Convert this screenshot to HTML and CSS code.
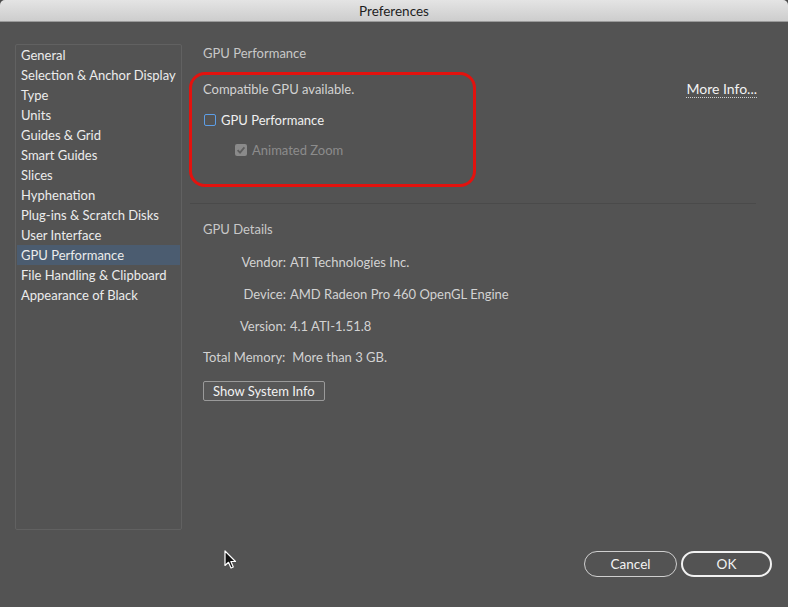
FILE: index.html
```html
<!DOCTYPE html>
<html lang="en">
<head>
    <meta charset="UTF-8">
    <title>Preferences</title>
    <link rel="stylesheet" href="styles.css">
</head>
<body>
    <div class="window">
        <div class="titlebar">Preferences</div>

        <div class="content">
            <ul class="sidebar">
                <li>General</li>
                <li>Selection &amp; Anchor Display</li>
                <li>Type</li>
                <li>Units</li>
                <li>Guides &amp; Grid</li>
                <li>Smart Guides</li>
                <li>Slices</li>
                <li>Hyphenation</li>
                <li>Plug-ins &amp; Scratch Disks</li>
                <li>User Interface</li>
                <li class="selected">GPU Performance</li>
                <li>File Handling &amp; Clipboard</li>
                <li>Appearance of Black</li>
            </ul>

            <div class="panel">
                <div class="section-title">GPU Performance</div>

                <div class="row first">
                    <span>Compatible GPU available.</span>
                    <a class="more-info">More Info...</a>
                </div>
                <label class="check-row">
                    <span class="checkbox"></span>
                    <span class="check-label">GPU Performance</span>
                </label>
                <label class="check-row sub disabled">
                    <span class="checkbox checked">
                        <svg width="12" height="12" viewBox="0 0 12 12"><path d="M2.6 6.2 L5 8.6 L9.4 3.4" fill="none" stroke="#5d5d5d" stroke-width="1.8"/></svg>
                    </span>
                    <span class="check-label">Animated Zoom</span>
                </label>

                <div class="highlight"></div>

                <hr class="separator">

                <div class="section-title details-title">GPU Details</div>
                <div class="details">
                    <span class="label">Vendor:</span><span>ATI Technologies Inc.</span>
                    <span class="label">Device:</span><span>AMD Radeon Pro 460 OpenGL Engine</span>
                    <span class="label">Version:</span><span>4.1 ATI-1.51.8</span>
                </div>
                <div class="memory">Total Memory:<span class="memory-value">More than 3 GB.</span></div>
                <button class="button">Show System Info</button>
            </div>
        </div>

        <div class="footer">
            <button class="pill">Cancel</button>
            <button class="pill default">OK</button>
        </div>

        <svg class="cursor" width="14" height="20" viewBox="0 0 14 20">
            <path d="M1 1 L1 15.5 L4.5 12.3 L7 18 L9.3 17 L6.9 11.5 L11.5 11.5 Z" fill="#111" stroke="#fff" stroke-width="1.2" stroke-linejoin="round"/>
        </svg>
    </div>
</body>
</html>
```

FILE: styles.css
```css
html, body {
    margin: 0;
    padding: 0;
    background: #4a4a4a;
}
body {
    font-family: Lato, 'Noto Sans', sans-serif;
    font-size: 13px;
}
.window {
    position: relative;
    width: 788px;
    height: 607px;
    background: #535353;
    border-radius: 5px 5px 0 0;
    overflow: hidden;
}
.titlebar {
    height: 21px;
    line-height: 22px;
    text-align: center;
    color: #1e1e1e;
    font-size: 13.5px;
    background: linear-gradient(#e4e4e4, #cdcdcd);
    border-bottom: 1px solid #9a9a9a;
}
.content {
    display: flex;
    padding: 22px 0 0 15px;
    height: 484px;
}
.sidebar {
    list-style: none;
    margin: 0;
    padding: 0 1px;
    width: 163px;
    height: 484px;
    border: 1px solid #616161;
    border-radius: 2px;
}
.sidebar li {
    height: 20px;
    line-height: 20px;
    padding-left: 4px;
    color: #ececec;
    white-space: nowrap;
}
.sidebar li.selected {
    background: #4b5c70;
}
.panel {
    position: relative;
    margin-left: 7px;
    width: 554px;
    padding-left: 14px;
    color: #d2d2d2;
}
.section-title {
    height: 18px;
    line-height: 18px;
    color: #c8c8c8;
}
.row {
    display: flex;
    justify-content: space-between;
    height: 18px;
    line-height: 18px;
}
.row.first {
    margin-top: 18px;
}
.more-info {
    color: #f2f2f2;
    font-size: 14px;
    line-height: 17px;
    border-bottom: 1px dotted #cfcfcf;
    height: 17px;
}
.check-row {
    display: flex;
    align-items: center;
    gap: 5px;
    height: 18px;
    margin-top: 13px;
}
.check-row.sub {
    margin-top: 12px;
    padding-left: 31px;
}
.checkbox {
    display: block;
    box-sizing: border-box;
    width: 12px;
    height: 12px;
    margin-left: 1px;
    border: 1px solid #5d9ee6;
    border-radius: 2px;
}
.checkbox.checked {
    border: none;
    background: #8a8a8a;
}
.checkbox svg {
    display: block;
}
.check-label {
    color: #f0f0f0;
}
.disabled .check-label {
    color: #8c8c8c;
}
.highlight {
    position: absolute;
    left: 0;
    top: 28px;
    width: 281px;
    height: 109px;
    border: 3px solid #e3120e;
    border-radius: 16px;
}
.separator {
    margin: 44px 0 0 -13px;
    width: 566px;
    border: none;
    border-top: 1px solid #4a4a4a;
    height: 0;
}
.details-title {
    margin-top: 16px;
}
.details {
    display: grid;
    grid-template-columns: 83px auto;
    column-gap: 4px;
    row-gap: 14px;
    margin-top: 15px;
    line-height: 18px;
}
.details .label {
    text-align: right;
}
.memory {
    margin-top: 13px;
    line-height: 18px;
}
.memory-value {
    margin-left: 7px;
}
.button {
    display: block;
    margin-top: 15px;
    height: 20px;
    padding: 0 9px;
    font-family: inherit;
    font-size: 13px;
    color: #f2f2f2;
    background: #575757;
    border: 1px solid #9a9a9a;
    border-radius: 2px;
}
.footer {
    display: flex;
    justify-content: flex-end;
    gap: 4px;
    padding: 23px 16px 0 0;
}
.pill {
    box-sizing: border-box;
    width: 93px;
    height: 26px;
    font-family: inherit;
    font-size: 13.5px;
    color: #f2f2f2;
    background: transparent;
    border: 1.5px solid #cfcfcf;
    border-radius: 13px;
}
.pill.default {
    width: 91px;
    border: 2px solid #f2f2f2;
}
.cursor {
    position: absolute;
    left: 224px;
    top: 550px;
}
```
